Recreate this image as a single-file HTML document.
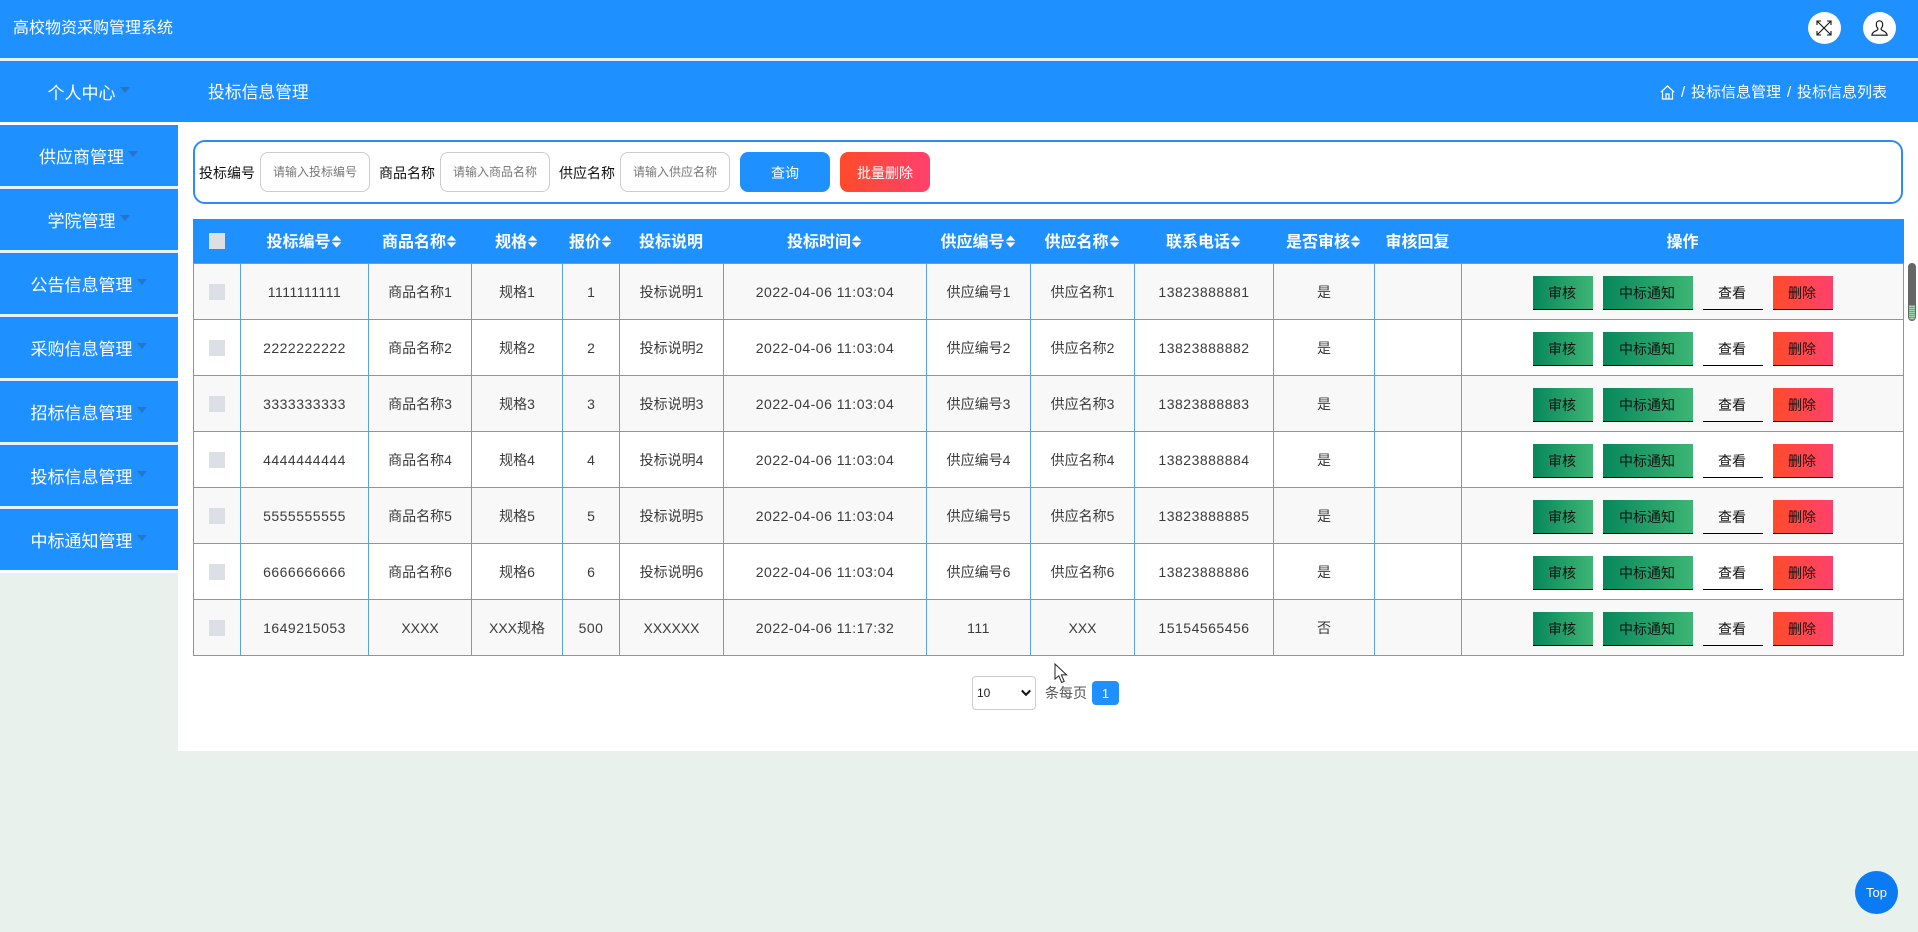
<!DOCTYPE html>
<html lang="zh-CN"><head><meta charset="utf-8"><title>高校物资采购管理系统</title>
<style>
*{box-sizing:border-box}
html,body{margin:0;padding:0;width:1918px;height:932px;overflow:hidden;background:#e8f1ec;font-family:"Liberation Sans","Noto Sans CJK SC",sans-serif;color:#333}
.a{position:absolute;white-space:nowrap}
.blue{background:#1e90ff}
.side{position:absolute;left:0;width:178px;height:61px;background:#1e90ff;color:#fff;font-size:17px;display:flex;align-items:center;justify-content:center;padding-right:1px;padding-bottom:1px}
.side i{display:inline-block;width:0;height:0;border-left:5px solid transparent;border-right:5px solid transparent;border-top:6px solid #2a74c6;margin:0 0 3px 4px}
.lab{position:absolute;top:153px;height:40px;line-height:40px;font-size:14px;color:#111}
.inp{position:absolute;top:152px;width:110px;height:40px;border:1px solid #ccc;border-radius:8px;background:#fff;font-size:12px;line-height:39px;padding-left:12px;color:#777;white-space:nowrap}
.btn{position:absolute;top:152px;width:90px;height:40px;border-radius:8px;color:#fff;font-size:14px;line-height:42px;text-align:center}
table{position:absolute;left:193px;top:219px;width:1711px;border-collapse:separate;border-spacing:0;table-layout:fixed;font-size:14px}
th{height:44px;background:#1e90ff;color:#fff;font-size:16px;font-weight:700;padding:0 0 2px;text-align:center;white-space:nowrap}
th svg{width:11px;height:13px;vertical-align:-1px;margin-left:0}
th .cb{margin-top:2px}
td{height:56px;padding:0;text-align:center;border-left:1px solid #5ba2e4;border-top:1px solid #5ba2e4;color:#3b3b3b;white-space:nowrap}
td.n{letter-spacing:.5px}
td:last-child{border-right:1px solid #5ba2e4}
tr.l td{border-bottom:1px solid #5ba2e4;height:57px}
tr.o td{background:#f8f8f9}
.cb{display:inline-block;width:16px;height:16px;background:#dcdfe6;vertical-align:middle}
td .cb{margin-top:-1px}
.ops{display:flex;justify-content:flex-start;padding-left:71px;height:34px;position:relative;top:1px}
.ops span{display:block;height:34px;line-height:35px;margin-right:10px;font-size:14px;color:#111;border-bottom:1px solid #000;text-align:center;padding-right:2px}
.g{width:60px;background:linear-gradient(to right,#07875d,#3eb574)}
.g2{width:90px;background:linear-gradient(to right,#07875d,#3eb574)}
.w{width:60px}
.r{width:60px;background:linear-gradient(to right,#ff4b2b,#ff416c)}
</style></head><body>
<div class="a blue" style="left:0;top:0;width:1918px;height:58px"></div>
<div class="a" style="left:13px;top:17px;font-size:16px;line-height:24px;color:#fff">高校物资采购管理系统</div>
<div class="a" style="left:1808px;top:12px;width:33px;height:32px;border-radius:50%;background:#fff"></div>
<svg class="a" style="left:1816px;top:20px" width="16" height="16" viewBox="0 0 16 16" fill="none" stroke="#111" stroke-width="1.1"><path d="M1.5 1.5 14.5 14.5M14.5 1.5 1.5 14.5M1 5V1H5M11 1H15V5M15 11V15H11M5 15H1V11"/></svg>
<div class="a" style="left:1863px;top:12px;width:33px;height:32px;border-radius:50%;background:#fff"></div>
<svg class="a" style="left:1871px;top:20px" width="17" height="16" viewBox="0 0 17 16" fill="none" stroke="#111" stroke-width="1.1"><path d="M8.5 .8C6.2.8 5.3 2.6 5.3 4.4 5.3 6 6 7.5 6.9 8.4 7.2 9.6 6.6 10.2 5 10.8 3 11.5 1.3 12.5 .8 15.2H16.2C15.7 12.5 14 11.5 12 10.8 10.4 10.2 9.8 9.6 10.1 8.4 11 7.5 11.7 6 11.7 4.4 11.7 2.6 10.8.8 8.5.8Z"/></svg>

<div class="a blue" style="left:0;top:61px;width:1918px;height:61px"></div>
<div class="side" style="top:61px">个人中心<i></i></div>
<div class="a" style="left:208px;top:81px;line-height:24px;color:#fff;font-size:16.8px">投标信息管理</div>
<svg class="a" style="left:1660px;top:85px" width="15" height="15" viewBox="0 0 15 15" fill="none" stroke="#fff" stroke-width="1.2"><path d="M.8 7.2 7.5 1 14.2 7.2M2.5 6V14H12.5V6M6 14V9H9V14"/></svg>
<div class="a" style="left:1681px;top:82px;font-size:15px;line-height:22px;color:#fff">/</div>
<div class="a" style="left:1691px;top:82px;font-size:15px;line-height:22px;color:#fff">投标信息管理</div>
<div class="a" style="left:1787px;top:82px;font-size:15px;line-height:22px;color:#fff">/</div>
<div class="a" style="left:1797px;top:82px;font-size:15px;line-height:22px;color:#fff">投标信息列表</div>

<div class="side" style="top:125px">供应商管理<i></i></div>
<div class="side" style="top:189px">学院管理<i></i></div>
<div class="side" style="top:253px">公告信息管理<i></i></div>
<div class="side" style="top:317px">采购信息管理<i></i></div>
<div class="side" style="top:381px">招标信息管理<i></i></div>
<div class="side" style="top:445px">投标信息管理<i></i></div>
<div class="side" style="top:509px">中标通知管理<i></i></div>
<div class="a" style="left:0;top:570px;width:178px;height:3px;background:#fff"></div>
<div class="a" style="left:0;top:122px;width:178px;height:3px;background:#fff"></div>
<div class="a" style="left:178px;top:122px;width:1740px;height:629px;background:#fff"></div>

<div class="a" style="left:193px;top:140px;width:1710px;height:64px;border:2px solid #2d8cf0;border-radius:12px"></div>
<div class="lab" style="left:199px">投标编号</div><div class="inp" style="left:260px">请输入投标编号</div>
<div class="lab" style="left:379px">商品名称</div><div class="inp" style="left:440px">请输入商品名称</div>
<div class="lab" style="left:559px">供应名称</div><div class="inp" style="left:620px">请输入供应名称</div>
<div class="btn" style="left:740px;background:#1e90ff">查询</div>
<div class="btn" style="left:840px;background:linear-gradient(to right,#ff4b2b,#ff416c)">批量删除</div>

<svg width="0" height="0" style="position:absolute"><defs><symbol id="s" viewBox="0 0 10 13"><path fill="#fff" d="M5 .5 9.8 5.6H.2ZM5 12.5 .2 7.4H9.8Z"/></symbol></defs></svg>
<table>
<colgroup><col style="width:47px"><col style="width:128px"><col style="width:103px"><col style="width:91px"><col style="width:57px"><col style="width:104px"><col style="width:203px"><col style="width:104px"><col style="width:104px"><col style="width:139px"><col style="width:101px"><col style="width:87px"><col style="width:443px"></colgroup>
<thead><tr>
<th><span class="cb"></span></th>
<th>投标编号<svg><use href="#s"/></svg></th>
<th>商品名称<svg><use href="#s"/></svg></th>
<th>规格<svg><use href="#s"/></svg></th>
<th>报价<svg><use href="#s"/></svg></th>
<th>投标说明</th>
<th>投标时间<svg><use href="#s"/></svg></th>
<th>供应编号<svg><use href="#s"/></svg></th>
<th>供应名称<svg><use href="#s"/></svg></th>
<th>联系电话<svg><use href="#s"/></svg></th>
<th>是否审核<svg><use href="#s"/></svg></th>
<th>审核回复</th>
<th>操作</th>
</tr></thead>
<tbody>
<tr class="o"><td><span class="cb"></span></td><td class="n">1111111111</td><td>商品名称1</td><td>规格1</td><td>1</td><td>投标说明1</td><td class="n">2022-04-06 11:03:04</td><td>供应编号1</td><td>供应名称1</td><td class="n">13823888881</td><td>是</td><td></td><td><div class="ops"><span class="g">审核</span><span class="g2">中标通知</span><span class="w">查看</span><span class="r">删除</span></div></td></tr>
<tr><td><span class="cb"></span></td><td class="n">2222222222</td><td>商品名称2</td><td>规格2</td><td>2</td><td>投标说明2</td><td class="n">2022-04-06 11:03:04</td><td>供应编号2</td><td>供应名称2</td><td class="n">13823888882</td><td>是</td><td></td><td><div class="ops"><span class="g">审核</span><span class="g2">中标通知</span><span class="w">查看</span><span class="r">删除</span></div></td></tr>
<tr class="o"><td><span class="cb"></span></td><td class="n">3333333333</td><td>商品名称3</td><td>规格3</td><td>3</td><td>投标说明3</td><td class="n">2022-04-06 11:03:04</td><td>供应编号3</td><td>供应名称3</td><td class="n">13823888883</td><td>是</td><td></td><td><div class="ops"><span class="g">审核</span><span class="g2">中标通知</span><span class="w">查看</span><span class="r">删除</span></div></td></tr>
<tr><td><span class="cb"></span></td><td class="n">4444444444</td><td>商品名称4</td><td>规格4</td><td>4</td><td>投标说明4</td><td class="n">2022-04-06 11:03:04</td><td>供应编号4</td><td>供应名称4</td><td class="n">13823888884</td><td>是</td><td></td><td><div class="ops"><span class="g">审核</span><span class="g2">中标通知</span><span class="w">查看</span><span class="r">删除</span></div></td></tr>
<tr class="o"><td><span class="cb"></span></td><td class="n">5555555555</td><td>商品名称5</td><td>规格5</td><td>5</td><td>投标说明5</td><td class="n">2022-04-06 11:03:04</td><td>供应编号5</td><td>供应名称5</td><td class="n">13823888885</td><td>是</td><td></td><td><div class="ops"><span class="g">审核</span><span class="g2">中标通知</span><span class="w">查看</span><span class="r">删除</span></div></td></tr>
<tr><td><span class="cb"></span></td><td class="n">6666666666</td><td>商品名称6</td><td>规格6</td><td>6</td><td>投标说明6</td><td class="n">2022-04-06 11:03:04</td><td>供应编号6</td><td>供应名称6</td><td class="n">13823888886</td><td>是</td><td></td><td><div class="ops"><span class="g">审核</span><span class="g2">中标通知</span><span class="w">查看</span><span class="r">删除</span></div></td></tr>
<tr class="o l"><td><span class="cb"></span></td><td class="n">1649215053</td><td>XXXX</td><td>XXX规格</td><td class="n">500</td><td>XXXXXX</td><td class="n">2022-04-06 11:17:32</td><td class="n">111</td><td>XXX</td><td class="n">15154565456</td><td>否</td><td></td><td><div class="ops"><span class="g">审核</span><span class="g2">中标通知</span><span class="w">查看</span><span class="r">删除</span></div></td></tr>
</tbody></table>

<div class="a" style="left:1908px;top:263px;width:8px;height:58px;border-radius:4px;background:#666"></div>
<div class="a" style="left:1909px;top:305px;width:6px;height:15px;border-radius:0 0 3px 3px;background:repeating-linear-gradient(#5cb176 0 1px,#9fd4ae 1px 2px)"></div>

<div class="a" style="left:972px;top:676px;width:64px;height:34px;border:1px solid #ccc;border-radius:4px;background:#fff;font-size:12px;line-height:33px;padding-left:4px;color:#222">10</div>
<svg class="a" style="left:1021px;top:689px" width="10" height="8" viewBox="0 0 10 8" fill="none" stroke="#111" stroke-width="2"><path d="M.8 1.5 5 5.8 9.2 1.5"/></svg>
<div class="a" style="left:1045px;top:683px;font-size:14px;line-height:20px;color:#555">条每页</div>
<div class="a" style="left:1092px;top:681px;width:27px;height:24px;border-radius:4px;background:#1e90ff;color:#fff;font-size:13px;line-height:25px;text-align:center">1</div>

<svg class="a" style="left:1054px;top:663px" width="14" height="21" viewBox="0 0 14 21"><path d="M1 1V16L4.8 12.8 7.6 19.5 10.2 18.4 7.4 11.9H12.6Z" fill="#fff" stroke="#222" stroke-width="1"/></svg>

<div class="a" style="left:1855px;top:871px;width:43px;height:43px;border-radius:50%;background:#0a7bf2;color:#fff;font-size:13px;font-weight:400;line-height:43px;text-align:center">Top</div>
</body></html>
